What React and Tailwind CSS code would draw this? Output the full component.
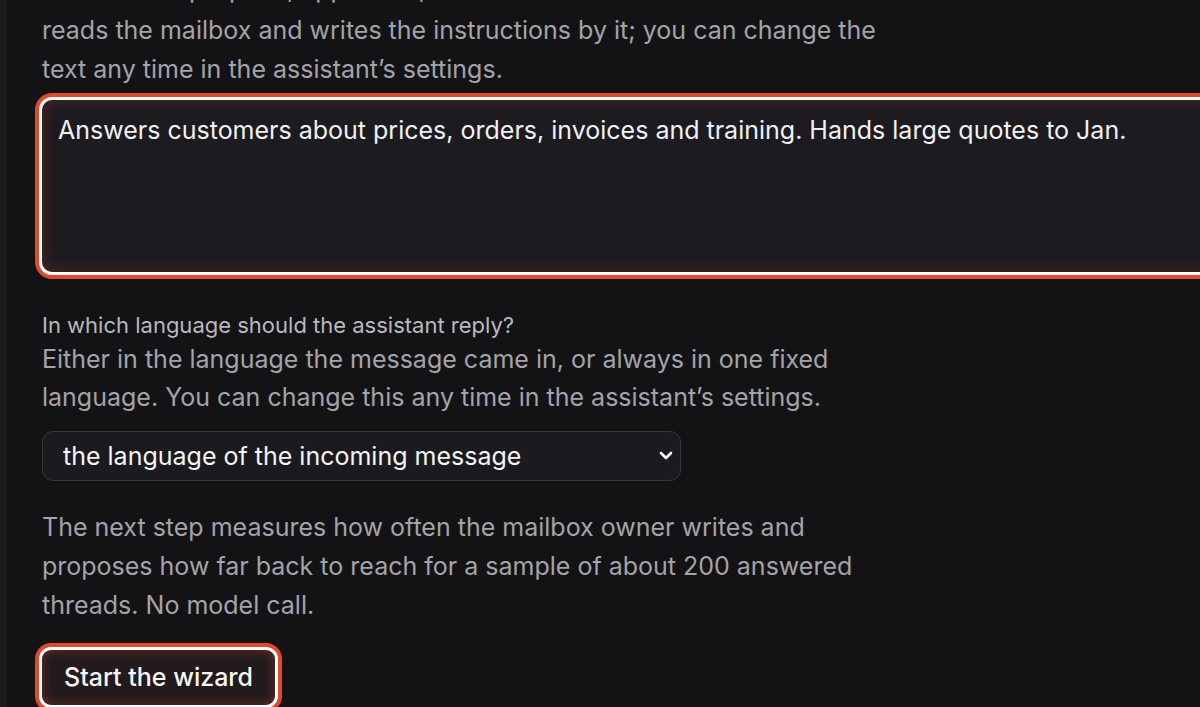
import React, { useState } from "react";

const font = { fontFamily: "Inter, 'Noto Sans', sans-serif" };

export default function App() {
  const [purpose, setPurpose] = useState(
    "Answers customers about prices, orders, invoices and training. Hands large quotes to Jan."
  );
  const [lang, setLang] = useState("incoming");

  return (
    <div className="flex h-[707px] w-[1200px] overflow-hidden bg-[#131316]" style={font}>
      {/* sidebar edge */}
      <div className="w-[7px] shrink-0 bg-[#1c1c20]" />

      {/* Main column */}
      <div className="flex flex-1 flex-col pl-[35px]">
        <p className="-mt-[28px] text-[25px] leading-[39px] text-[#a3a3a9]">
          <span className="relative -top-[2px]">Describe its purpose, approve it, and the wizard then</span>
          <br />
          reads the mailbox and writes the instructions by it; you can change the
          <br />
          text any time in the assistant’s settings.
        </p>

        <textarea
          value={purpose}
          onChange={(e) => setPurpose(e.target.value)}
          className="mt-[11px] h-[172px] w-[1200px] resize-none rounded-[10px] bg-[#1c1b20] px-[16px] py-[12px] text-[25px] leading-[36px] text-[#f1f1f3] outline-none shadow-[0_0_0_3px_#ffffff,0_0_0_7px_#e04a2b,inset_0_0_16px_rgba(210,70,45,0.3)]"
          style={font}
        />

        <label className="mt-[38px] text-[22px] leading-[30px] text-[#b9b9be]">
          In which language should the assistant reply?
        </label>
        <p className="text-[25px] leading-[38px] text-[#a3a3a9]">
          Either in the language the message came in, or always in one fixed
          <br />
          language. You can change this any time in the assistant’s settings.
        </p>

        <div className="relative mt-[15px] w-[639px]">
          <select
            value={lang}
            onChange={(e) => setLang(e.target.value)}
            className="h-[50px] w-full appearance-none rounded-[11px] border border-[#36363b] bg-[#1b1b1f] pb-[1px] pl-[20px] pr-[40px] pt-[3px] text-[25px] text-[#f4f4f5] outline-none"
            style={font}
          >
            <option value="incoming">the language of the incoming message</option>
            <option value="fixed">always one fixed language</option>
          </select>
          <svg
            className="pointer-events-none absolute right-[8px] top-[18px]"
            width="14"
            height="14"
            viewBox="0 0 14 14"
            fill="none"
          >
            <path d="M2 4l5 5 5-5" stroke="#ffffff" strokeWidth="2.6" strokeLinecap="round" strokeLinejoin="round" />
          </svg>
        </div>

        <p className="mt-[27px] text-[25px] leading-[39px] text-[#a3a3a9]">
          The next step measures how often the mailbox owner writes and
          <br />
          proposes how far back to reach for a sample of about 200 answered
          <br />
          threads. No model call.
        </p>

        <div className="mt-[25px]">
          <button className="h-[55px] rounded-[9px] bg-[#221a1d] px-[22px] text-[25px] font-medium text-[#f6f6f7] shadow-[0_0_0_3px_#ffffff,0_0_0_7px_#e04a2b,inset_0_0_12px_rgba(220,80,55,0.4)]">
            Start the wizard
          </button>
        </div>
      </div>
    </div>
  );
}
